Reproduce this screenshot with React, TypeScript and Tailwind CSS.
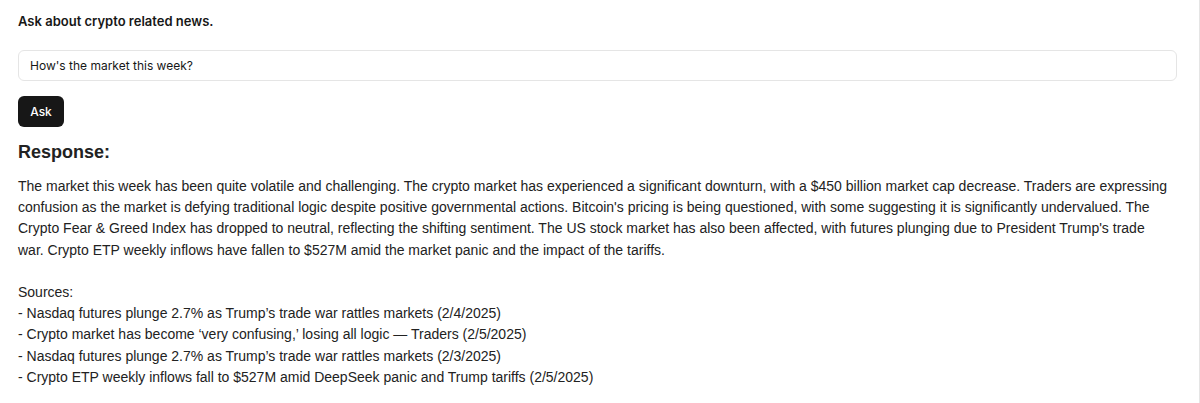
import React, { useState } from 'react';

const answer = `The market this week has been quite volatile and challenging. The crypto market has experienced a significant downturn, with a $450 billion market cap decrease. Traders are expressing confusion as the market is defying traditional logic despite positive governmental actions. Bitcoin's pricing is being questioned, with some suggesting it is significantly undervalued. The Crypto Fear & Greed Index has dropped to neutral, reflecting the shifting sentiment. The US stock market has also been affected, with futures plunging due to President Trump's trade war. Crypto ETP weekly inflows have fallen to $527M amid the market panic and the impact of the tariffs.

Sources:
- Nasdaq futures plunge 2.7% as Trump’s trade war rattles markets (2/4/2025)
- Crypto market has become ‘very confusing,’ losing all logic — Traders (2/5/2025)
- Nasdaq futures plunge 2.7% as Trump’s trade war rattles markets (2/3/2025)
- Crypto ETP weekly inflows fall to $527M amid DeepSeek panic and Trump tariffs (2/5/2025)`;

export default function App() {
  const [question, setQuestion] = useState("How's the market this week?");

  return (
    <div className="min-h-[403px] w-[1200px] bg-white border-r border-[#e5e5e5]">
      <div className="pl-[18px] pr-[22px] pt-[11px]" style={{ fontFamily: 'Inter, "Liberation Sans", sans-serif' }}>
        <h1 className="text-[13px] leading-[20px] font-semibold text-[#171717]">Ask about crypto related news.</h1>

        <input
          value={question}
          onChange={(e) => setQuestion(e.target.value)}
          className="mt-[19px] block w-full h-[31px] rounded-md border border-[#e5e5e5] bg-white px-[11px] text-[12px] text-[#171717] outline-none"
        />

        <button className="mt-[15px] h-[31px] w-[46px] rounded-md bg-[#171717] text-[12px] font-medium text-white">
          Ask
        </button>
      </div>

      <div className="pl-[18px] pr-[22px] mt-[13px] text-[#222]" style={{ fontFamily: '"Liberation Sans", Arial, sans-serif' }}>
        <h2 className="text-[18px] leading-[24px] font-bold">Response:</h2>
        <p className="mt-[12px] max-w-[1152px] whitespace-pre-wrap text-[14px] leading-[21.2px]">{answer}</p>
      </div>
    </div>
  );
}
